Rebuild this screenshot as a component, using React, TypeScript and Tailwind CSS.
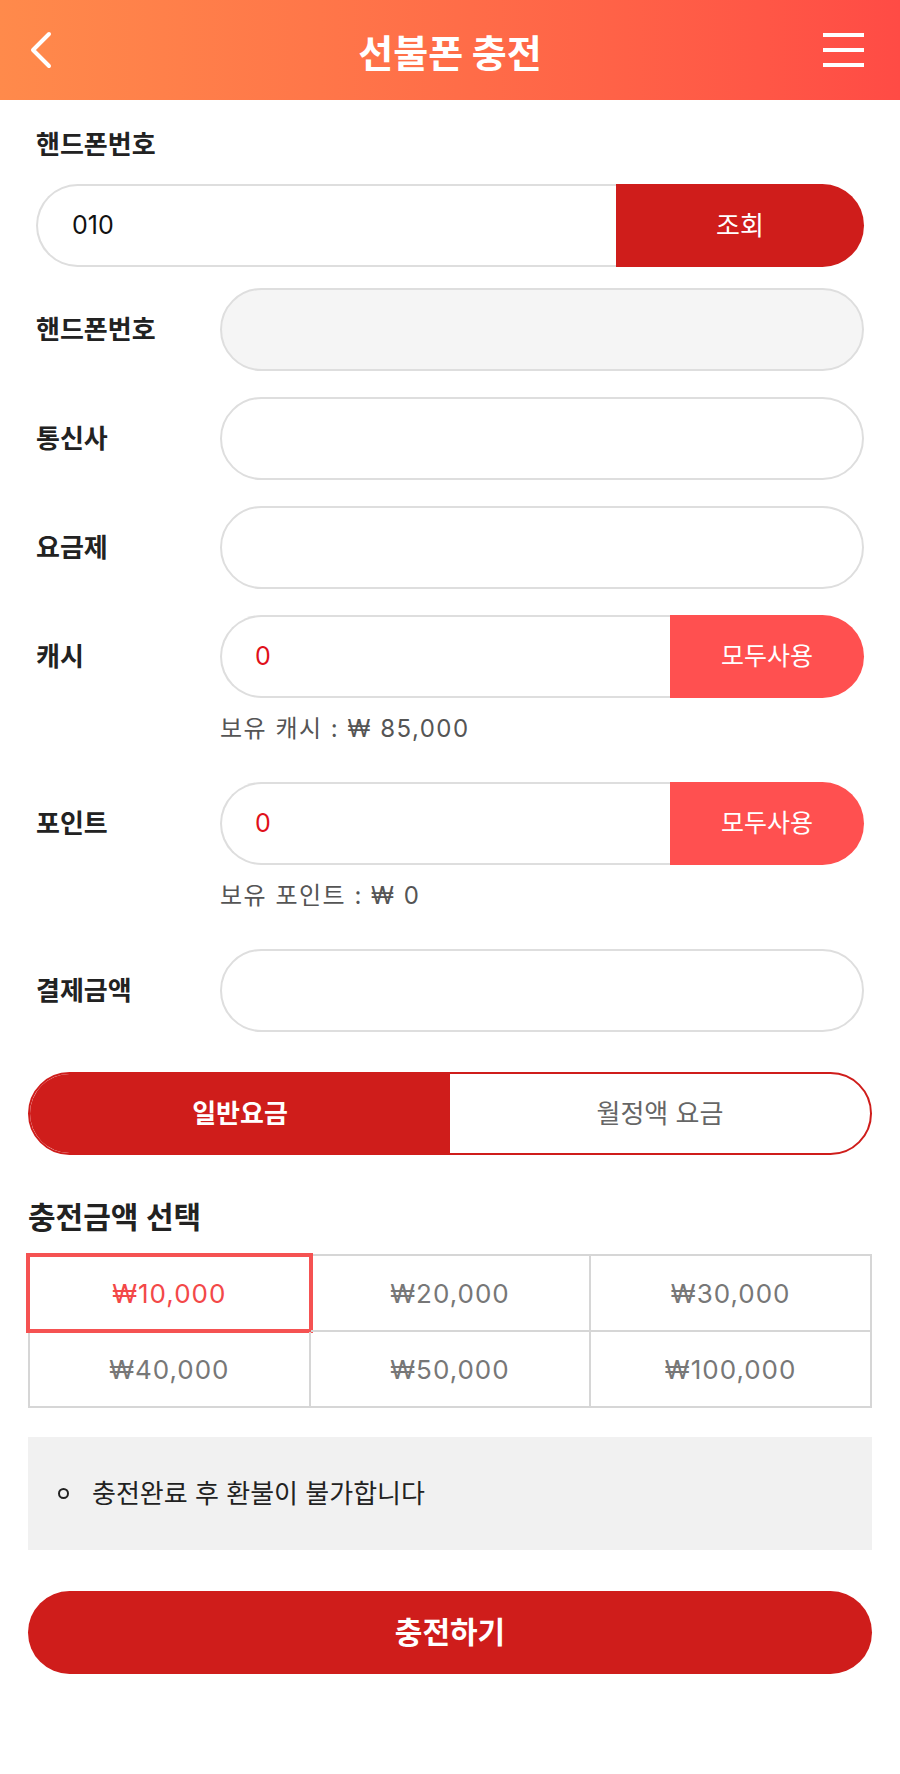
import React from "react";

const amounts = ["₩10,000", "₩20,000", "₩30,000", "₩40,000", "₩50,000", "₩100,000"];

function Field({ label, disabled }: { label: string; disabled?: boolean }) {
  return (
    <div className="flex items-center">
      <div className="w-[184px] shrink-0 text-[26px] font-semibold text-[#222]">{label}</div>
      <div
        className={`flex-1 h-[83px] rounded-full border-2 border-[#dedede] ${disabled ? "bg-[#f5f5f5]" : "bg-white"}`}
      />
    </div>
  );
}

function UseAllField({ label, caption }: { label: string; caption: string }) {
  return (
    <div>
      <div className="flex items-center">
        <div className="w-[184px] shrink-0 text-[26px] font-semibold text-[#222]">{label}</div>
        <div className="flex-1 flex h-[83px]">
          <div className="flex-1 flex items-center pl-[33px] rounded-l-full border-2 border-r-0 border-[#dedede] text-[25px] text-[#e0101a]">
            0
          </div>
          <button className="w-[194px] rounded-r-full bg-[#ff5050] text-white text-[25px]">모두사용</button>
        </div>
      </div>
      <div className="pl-[184px] mt-[16px] h-[30px] leading-[30px] text-[24px] text-[#555] tracking-[1.5px]">{caption}</div>
    </div>
  );
}

export default function App() {
  return (
    <div className="w-[900px] min-h-[1774px] bg-white font-['Inter','Noto_Sans_CJK_KR',sans-serif]">
      <header className="h-[100px] grid grid-cols-[1fr_auto_1fr] items-center pl-[29px] pr-[36px] bg-gradient-to-r from-[#ff8a4b] to-[#ff4b45]">
        <svg width="24" height="38" viewBox="0 0 24 38" fill="none">
          <path d="M20 3 L4 19 L20 35" stroke="white" strokeWidth="4" strokeLinecap="round" strokeLinejoin="round" />
        </svg>
        <h1 className="ml-[7px] text-[38px] font-bold text-white font-['Noto_Sans_CJK_KR',sans-serif]">선불폰 충전</h1>
        <svg className="justify-self-end" width="41" height="34" viewBox="0 0 41 34" fill="none">
          <rect x="0" y="0" width="41" height="4" fill="white" />
          <rect x="0" y="15" width="41" height="4" fill="white" />
          <rect x="0" y="30" width="41" height="4" fill="white" />
        </svg>
      </header>

      <section className="px-[36px]">
        <div className="pt-[29px] text-[26px] font-semibold text-[#222] leading-[32px]">핸드폰번호</div>
        <div className="mt-[23px] flex h-[83px]">
          <div className="flex-1 flex items-center pl-[34px] rounded-l-full border-2 border-r-0 border-[#dedede] text-[25px] text-[#111]">
            010
          </div>
          <button className="w-[248px] rounded-r-full bg-[#cf1d1b] text-white text-[26px]">조회</button>
        </div>

        <div className="mt-[21px] flex flex-col gap-[26px]">
          <Field label="핸드폰번호" disabled />
          <Field label="통신사" />
          <Field label="요금제" />
          <UseAllField label="캐시" caption="보유 캐시 : ₩ 85,000" />
        </div>
        <div className="mt-[38px]">
          <UseAllField label="포인트" caption="보유 포인트 : ₩ 0" />
        </div>
        <div className="mt-[38px]">
          <Field label="결제금액" />
        </div>
      </section>

      <section className="px-[28px]">
        <div className="mt-[40px] flex h-[83px] rounded-full border-2 border-[#cf1d1b] overflow-hidden">
          <div className="flex-1 flex items-center justify-center bg-[#cf1d1b] text-white text-[26px] font-bold">
            일반요금
          </div>
          <div className="flex-1 flex items-center justify-center text-[#666] text-[26px]">월정액 요금</div>
        </div>

        <h2 className="mt-[44px] text-[30px] font-semibold text-[#222] leading-[36px]">충전금액 선택</h2>

        <div className="mt-[19px] grid grid-cols-3 border-t-2 border-l-2 border-[#d6d6d6]">
          {amounts.map((a, i) => (
            <div
              key={a}
              className={`relative h-[76px] flex items-center justify-center border-r-2 border-b-2 border-[#d6d6d6] text-[26px] tracking-[1px] ${
                i === 0 ? "text-[#f34848]" : "text-[#777]"
              }`}
            >
              {a}
              {i === 0 && <div className="absolute -top-[3px] -left-[4px] -right-[4px] -bottom-[3px] border-[4px] border-[#f55252]" />}
            </div>
          ))}
        </div>

        <div className="mt-[29px] h-[113px] bg-[#f1f1f1] flex items-center pl-[30px]">
          <span className="w-[11px] h-[11px] rounded-full border-2 border-[#222]" />
          <span className="ml-[23px] text-[26px] text-[#222]">충전완료 후 환불이 불가합니다</span>
        </div>

        <button className="mt-[41px] w-full h-[83px] rounded-full bg-[#cf1d1b] text-white text-[30px] font-bold">
          충전하기
        </button>
      </section>
    </div>
  );
}
